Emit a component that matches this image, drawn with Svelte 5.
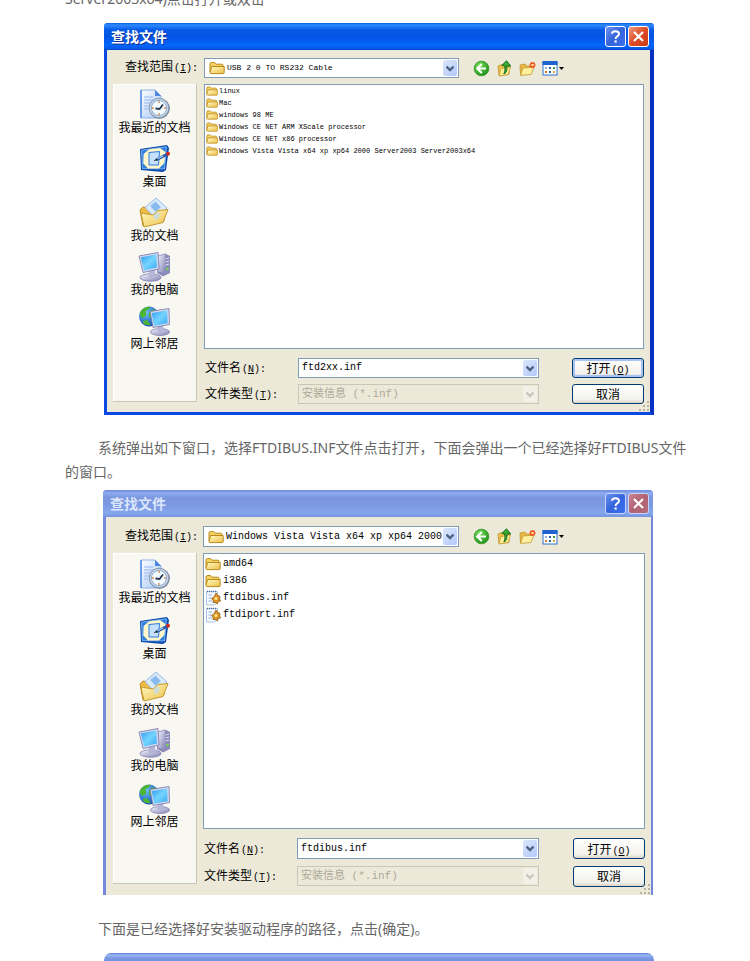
<script>
  const places = [
    { icon: 'recent', label: '我最近的文档' },
    { icon: 'desktop', label: '桌面' },
    { icon: 'documents', label: '我的文档' },
    { icon: 'computer', label: '我的电脑' },
    { icon: 'network', label: '网上邻居' }
  ];

  const dialogs = [
    {
      id: 'driver',
      active: true,
      folder: 'USB 2 0 TO RS232 Cable',
      fileName: 'ftd2xx.inf',
      files: [
        { icon: 'folder', name: 'linux' },
        { icon: 'folder', name: 'Mac' },
        { icon: 'folder', name: 'windows 98 ME' },
        { icon: 'folder', name: 'Windows CE NET ARM XScale processor' },
        { icon: 'folder', name: 'Windows CE NET x86 processor' },
        { icon: 'folder', name: 'Windows Vista Vista x64 xp xp64 2000 Server2003 Server2003x64' }
      ]
    },
    {
      id: 'bus',
      active: false,
      folder: 'Windows Vista Vista x64 xp xp64 2000',
      fileName: 'ftdibus.inf',
      files: [
        { icon: 'folder', name: 'amd64' },
        { icon: 'folder', name: 'i386' },
        { icon: 'inf', name: 'ftdibus.inf' },
        { icon: 'inf', name: 'ftdiport.inf' }
      ]
    }
  ];
</script>

{#snippet icon(name, size)}
  <svg class="icon" width={size} height={size} aria-hidden="true"><use href="#{name}" /></svg>
{/snippet}

{#snippet arrow()}
  <svg width="8" height="7" viewBox="0 0 8 7" aria-hidden="true">
    <path d="M0.5 1.5 L4 5 L7.5 1.5" fill="none" stroke="currentColor" stroke-width="2.4" />
  </svg>
{/snippet}

{#snippet fileDialog(d)}
  <section class="dialog" class:active={d.active}>
    <header class="title">
      <h2>查找文件</h2>
      <button class="caption" aria-label="帮助">
        <svg width="19" height="19" viewBox="0 0 19 19">
          <path d="M6 6.7 C6 3.4 13 3.2 13 6.9 C13 9.3 9.6 9 9.6 12" fill="none" stroke="#fff" stroke-width="2" />
          <rect x="8.5" y="13.4" width="2.2" height="2.2" fill="#fff" />
        </svg>
      </button>
      <button class="caption close" aria-label="关闭">
        <svg width="19" height="19" viewBox="0 0 19 19">
          <path d="M5 5 L14 14 M14 5 L5 14" stroke="#fff" stroke-width="2.2" />
        </svg>
      </button>
    </header>

    <div class="body">
      <div class="lookin">
        <label for="{d.id}-folder">查找范围<span class="key">(<u>I</u>):</span></label>
        <div class="combo">
          {@render icon('folder', 16)}
          <select id="{d.id}-folder"><option>{d.folder}</option></select>
          <span class="drop">{@render arrow()}</span>
        </div>
        <div class="tools">
          <button aria-label="后退">{@render icon('back', 17)}</button>
          <button aria-label="向上一级">{@render icon('up', 17)}</button>
          <button aria-label="新建文件夹">{@render icon('newfolder', 17)}</button>
          <button class="views" aria-label="查看">
            {@render icon('views', 16)}
            <svg width="5" height="3" viewBox="0 0 5 3"><path d="M0 0 H5 L2.5 3 Z" /></svg>
          </button>
        </div>
      </div>

      <div class="content">
        <nav class="places">
          {#each places as place}
            <button>
              {@render icon(place.icon, 32)}
              <span>{place.label}</span>
            </button>
          {/each}
        </nav>

        <div class="main">
          <ul class="files">
            {#each d.files as file}
              <li>
                {@render icon(file.icon, d.active ? 12 : 16)}
                <span>{file.name}</span>
              </li>
            {/each}
          </ul>

          <div class="field">
            <label for="{d.id}-name">文件名<span class="key">(<u>N</u>):</span></label>
            <div class="combo">
              <input id="{d.id}-name" type="text" value={d.fileName} />
              <button class="drop" aria-label="展开">{@render arrow()}</button>
            </div>
            <button class="push default">打开<span class="key">(<u>O</u>)</span></button>
          </div>
          <div class="field">
            <label for="{d.id}-type">文件类型<span class="key">(<u>T</u>):</span></label>
            <div class="combo disabled">
              <select id="{d.id}-type" disabled><option>安装信息 (*.inf)</option></select>
              <span class="drop">{@render arrow()}</span>
            </div>
            <button class="push">取消</button>
          </div>
        </div>
      </div>
    </div>

    <svg class="grip" width="11" height="11" viewBox="0 0 11 11" fill="#b8b4a2" aria-hidden="true">
      <path d="M8 0h2v2h-2z M4 4h2v2h-2z M8 4h2v2h-2z M0 8h2v2h-2z M4 8h2v2h-2z M8 8h2v2h-2z" />
    </svg>
  </section>
{/snippet}

<svg class="sprite" aria-hidden="true">
  <defs>
    <linearGradient id="gold" x1="0" y1="0" x2="1" y2="1">
      <stop offset="0" stop-color="#fffbc4" />
      <stop offset="1" stop-color="#eec04a" />
    </linearGradient>
    <linearGradient id="screen" x1="0" y1="0" x2="1" y2="1">
      <stop offset="0" stop-color="#2f9af0" />
      <stop offset="0.5" stop-color="#74d4ff" />
      <stop offset="1" stop-color="#38a8f4" />
    </linearGradient>
    <linearGradient id="metal" x1="0" y1="0" x2="1" y2="1">
      <stop offset="0" stop-color="#f2f2fc" />
      <stop offset="1" stop-color="#8384b6" />
    </linearGradient>
    <linearGradient id="paper" x1="0" y1="0" x2="1" y2="1">
      <stop offset="0" stop-color="#ffffff" />
      <stop offset="1" stop-color="#a5c6f4" />
    </linearGradient>
    <radialGradient id="green" cx="0.35" cy="0.3" r="0.8">
      <stop offset="0" stop-color="#7be05c" />
      <stop offset="1" stop-color="#178a14" />
    </radialGradient>
    <radialGradient id="ocean" cx="0.35" cy="0.3" r="0.8">
      <stop offset="0" stop-color="#6fc4ff" />
      <stop offset="1" stop-color="#0a3fae" />
    </radialGradient>
  </defs>

  <symbol id="folder" viewBox="0 0 16 16">
    <path d="M1 4 Q1 2.5 2.5 2.5 H5.5 L7 4.2 H13 Q14 4.2 14 5.4 V12 H1 Z" fill="#f5d262" stroke="#b88a1c" />
    <path d="M2.6 6.5 H15.2 V12.6 Q15.2 13.6 14.2 13.6 H2 Q1 13.6 1 12.5 Z" fill="url(#gold)" stroke="#b88a1c" />
  </symbol>

  <symbol id="inf" viewBox="0 0 16 16">
    <path d="M1.5 1.5 H12.5 V11 L9.5 15 H1.5 Z" fill="#f4f9ff" stroke="#a9c3e2" />
    <path d="M2 1.5 H12" stroke="#4b6c9c" stroke-width="1.6" stroke-dasharray="1 1" />
    <path d="M3.5 5 H7 M3.5 8 H6 M3.5 11 H7" stroke="#92b4df" />
    <path d="M11 3 L12.8 5.2 L15 6.5 L14.6 9 L15.6 11 L13 11.5 L12.4 14 L10.5 12.5 L8 12.5 L8.3 10.4 L6.4 8.6 L9 7 Z" fill="#dc9628" stroke="#8d5c12" stroke-width="0.8" />
    <circle cx="11" cy="8.6" r="1.5" fill="#ffe58c" />
  </symbol>

  <symbol id="back" viewBox="0 0 17 17">
    <circle cx="8.5" cy="8.5" r="7.3" fill="url(#green)" stroke="#3d9c30" />
    <path d="M8.8 4 L4.3 8.5 L8.8 13 M5 8.5 H13" fill="none" stroke="#fff" stroke-width="2.2" />
  </symbol>

  <symbol id="up" viewBox="0 0 17 17">
    <path d="M2 6 L6 4.5 L8 6 H13 V14.5 L3 15.5 Z" fill="#edc14d" stroke="#be9429" stroke-width="0.8" />
    <path d="M5 8.5 L14.5 7 L12 14.5 L3 16 Z" fill="#fff19a" stroke="#c59b2d" stroke-width="0.8" />
    <path d="M7.8 14 C11.5 12.5 11 9 10.7 6 H14.8 L10.5 0.8 L5.8 5.4 L8.6 5.8 C9.3 9 9 11.5 7.8 14 Z" fill="#35ad32" stroke="#126217" stroke-width="0.9" />
  </symbol>

  <symbol id="newfolder" viewBox="0 0 17 17">
    <path d="M1 5 L6 4 L7.5 6 H12 V14 L1.5 15 Z" fill="#e7b843" stroke="#c1962d" stroke-width="0.8" />
    <path d="M4 8 L15 7.2 L12 14.5 L1.5 15.4 Z" fill="#fff0a0" stroke="#c49b33" stroke-width="0.8" />
    <path d="M13.5 2 V8 M10.5 5 H16.5 M11.4 2.9 L15.6 7.1 M15.6 2.9 L11.4 7.1" stroke="#ec4a1a" stroke-width="1.5" />
    <circle cx="13.5" cy="5" r="1.3" fill="#ffe294" />
  </symbol>

  <symbol id="views" viewBox="0 0 16 16">
    <rect x="1" y="2" width="14" height="13" fill="#fff" stroke="#2b6fd2" />
    <rect x="0.5" y="1" width="15" height="4" fill="#1f62cd" />
    <path d="M3 7h2v2H3z" fill="#9db1cf" />
    <path d="M3 11h2v2H3z" fill="#e77536" />
    <path d="M7 7h2v2H7z M7 11h2v2H7z" fill="#2d5ca6" />
    <path d="M11 7h2v2h-2z" fill="#349545" />
    <path d="M11 11h2v2h-2z" fill="#d9a63a" />
  </symbol>

  <symbol id="recent" viewBox="0 0 32 32">
    <path d="M3 1 H17 L23 7 V29 H3 Z" fill="url(#paper)" stroke="#8db2ea" />
    <path d="M3 1 V29" stroke="#4c86e0" stroke-width="1.4" />
    <path d="M17 1 V7 H23 Z" fill="#4c86e0" />
    <path d="M6 8 H15 M6 11 H18 M6 14 H13 M6 17 H11 M6 20 H10" stroke="#93b6ef" />
    <circle cx="21.5" cy="19.5" r="10.3" fill="#6d7b92" />
    <circle cx="21" cy="19" r="9.8" fill="#c9d5e3" stroke="#8799b5" />
    <circle cx="21" cy="19" r="7.6" fill="#f3faff" stroke="#8dafd5" />
    <path d="M21 12v2 M21 24v2 M14 19h2 M26 19h2" stroke="#e08c45" stroke-width="1.4" />
    <path d="M17.5 19.5 L21.5 20 L25 15.5" fill="none" stroke="#26374f" stroke-width="1.8" />
  </symbol>

  <symbol id="desktop" viewBox="0 0 32 32">
    <path d="M1 6 L28 2 L30 5 L27 27 L24 29 L2 27 Z" fill="#0b4ba8" />
    <path d="M2.5 7.2 L27.5 3.8 L25.5 26 L3.5 25.5 Z" fill="#2f7fe0" stroke="#8bc2ff" stroke-width="0.8" />
    <path d="M10 6.3 L21 5 L26.5 9 L25.4 20 L20 25.5 H9 L4.3 20.5 L4.6 11 Z" fill="#fff6cb" />
    <path d="M10 9.5 L20.5 8.5 L19.5 22 H10 Z" fill="#c4e2ff" stroke="#2f7bdc" />
    <path d="M18 16.5 L28.5 11" stroke="#2d60b0" stroke-width="3" />
    <path d="M18 16 L24 13" stroke="#a9d0f8" stroke-width="1.2" />
    <path d="M14.5 18 L18 15 L19 17.6 Z" fill="#222c45" />
    <circle cx="29" cy="10.8" r="2" fill="#ce2b1d" />
  </symbol>

  <symbol id="documents" viewBox="0 0 32 32">
    <path d="M2 13 L5 10 L11 11 L15 8 L27 11 L26 24 L5 29 Z" fill="#eebb45" stroke="#bd8c22" />
    <path d="M7 10.5 L18 1 L29 11 L18 22 Z" fill="#dcebfb" stroke="#96bbe5" />
    <path d="M12 9 L17.5 4.5 L23 10 L17.5 15 Z" fill="#88b9ef" stroke="#bcd9f7" />
    <path d="M3 16 L15 18 L20 13.5 L30 12.5 L25 25.5 L6 30 Z" fill="url(#gold)" stroke="#c79a32" />
    <path d="M15 19 L20 14.5 L22 19 L18 24 Z" fill="#c4dcec" opacity="0.8" />
  </symbol>

  <symbol id="computer" viewBox="0 0 32 32">
    <path d="M19 5 L27 2.5 L32 5 V22 L25 25.5 L19 22 Z" fill="#8b8cb9" />
    <path d="M20 5.5 L27 3.2 V22 L20 20.5 Z" fill="url(#metal)" />
    <path d="M27.5 8 L31 7 M27.5 11 L31 10 M27.5 14 L31 13" stroke="#dfe0f3" />
    <circle cx="29.4" cy="18" r="1.3" fill="#73d945" />
    <ellipse cx="12.5" cy="26.5" rx="10.5" ry="3.8" fill="url(#metal)" stroke="#7477a9" stroke-width="0.7" />
    <path d="M11 19 L17 19 L18 26 Q14 28.5 10.5 25.5 Z" fill="#b6b7d8" />
    <path d="M1 5 L20 1.5 L21 18 L5 21.5 Z" fill="#d6d8ee" stroke="#7477a9" stroke-width="0.8" />
    <path d="M2.8 6.3 L18.2 3.5 L19 16.6 L6 19.5 Z" fill="url(#screen)" />
  </symbol>

  <symbol id="network" viewBox="0 0 32 32">
    <circle cx="11" cy="11.5" r="10" fill="url(#ocean)" />
    <path d="M2 7 Q6 1 13 1.8 L10 5 L7.5 6 L8.5 10 L5 13 L2 11 Z M11 7 L16 4 L18 8 L15 14 L11 12 Z M5 16 L9 15 L13 20 Q8 21 5 18 Z" fill="#4cb634" />
    <ellipse cx="22" cy="27" rx="9.5" ry="3.5" fill="url(#metal)" stroke="#7477a9" stroke-width="0.7" />
    <path d="M19 20 H25 L26 26.5 Q22 28.5 19.5 26 Z" fill="#b6b7d8" />
    <path d="M12 6.5 L31 3.5 L31.5 19.5 L15 22.5 Z" fill="#d6d8ee" stroke="#7477a9" stroke-width="0.8" />
    <path d="M13.7 8 L29.2 5.5 L29.6 18.2 L16 20.7 Z" fill="url(#screen)" />
  </symbol>
</svg>

<article>
  <div class="lead"><p>Server2003x64)点击打开或双击</p></div>
  {@render fileDialog(dialogs[0])}
  <p class="step">系统弹出如下窗口，选择FTDIBUS.INF文件点击打开，下面会弹出一个已经选择好FTDIBUS文件的窗口。</p>
  {@render fileDialog(dialogs[1])}
  <p class="step last">下面是已经选择好安装驱动程序的路径，点击(确定)。</p>
  <div class="next"></div>
</article>

<style>
  :global(body) {
    margin: 0;
    background: #fff;
  }
  .sprite {
    display: block;
    width: 0;
    height: 0;
  }
  article {
    padding: 0 60px 0 65px;
    color: #666;
    font: 14px/24px "Noto Sans", "Noto Sans CJK SC", sans-serif;
  }
  p {
    margin: 0;
  }
  .lead {
    display: flex;
    align-items: flex-end;
    height: 11px;
    margin-bottom: 12px;
    overflow: hidden;
  }
  .step {
    padding: 21px 0 6px;
    text-indent: 33px;
  }
  .step.last {
    padding: 22px 0 12px;
  }
  .next {
    height: 8px;
    margin: 0 36px 0 39px;
    border-radius: 7px 7px 0 0;
    background: linear-gradient(#5b78cf, #9db9f2 2px, #7b99e4 5px, #7591de);
  }

  .dialog {
    position: relative;
    box-sizing: border-box;
    margin: 0 37px 0 38px;
    border: solid #7588e0;
    border-width: 0 2px 0 3px;
    border-radius: 4px 4px 0 0;
    background: #ece9d8;
    color: #000;
    font: 12px/16px "Noto Sans CJK SC", sans-serif;
  }
  .dialog.active {
    margin: 0 36px 0 39px;
    border-color: #0a48e4;
    border-right-color: #0831c4;
    border-width: 0 4px 3px 3px;
  }
  button {
    padding: 0;
    border: 0;
    background: none;
    color: inherit;
    font: inherit;
  }
  .icon {
    flex: none;
    display: block;
  }
  .key {
    margin-left: 1px;
    font: 10px/10px "Liberation Mono", monospace;
  }

  .title {
    display: flex;
    align-items: center;
    gap: 2px;
    height: 27px;
    margin: 0 -2px 0 -3px;
    padding: 0 4px 0 7px;
    border-radius: 4px 4px 0 0;
    background: linear-gradient(#6d8ade, #8eabee 3px, #7a96df 8px, #7c9ae3 16px, #85a8ec 23px, #7893de);
    color: #dce6fb;
  }
  .active .title {
    margin: 0 -4px 0 -3px;
    padding: 0 5px 0 7px;
    background: linear-gradient(#0a5ad8, #2f8bff 2px, #0759e6 7px, #0454e4 14px, #0566fd 22px, #0458e8 26px, #0141c0);
    color: #fff;
    text-shadow: 1px 1px 0 #0a2f94;
  }
  h2 {
    flex: 1;
    margin: 0;
    padding-bottom: 2px;
    font-size: 14px;
    line-height: 20px;
    font-weight: bold;
  }
  .caption {
    display: flex;
    box-sizing: border-box;
    width: 21px;
    height: 21px;
    border: 1px solid #c6d6fa;
    border-radius: 3px;
    background: linear-gradient(135deg, #6c92ee, #3463dc 50%, #3c70ee);
  }
  .caption.close {
    background: linear-gradient(135deg, #c88590, #b06273 50%, #b46c78);
  }
  .active .caption {
    border-color: #fff;
  }
  .active .close {
    background: linear-gradient(135deg, #f09a80, #dd4c28 50%, #cc3b12);
  }

  .body {
    padding: 9px 6px 9px 7px;
  }
  .active .body {
    padding: 8px 6px 8px;
  }
  .lookin {
    display: flex;
    align-items: center;
    height: 21px;
    margin-bottom: 6px;
  }
  .active .lookin {
    height: 20px;
  }
  .lookin label {
    box-sizing: border-box;
    width: 90px;
    padding: 0 0 4px 12px;
    white-space: nowrap;
  }
  .active .lookin label {
    width: 91px;
  }
  .combo {
    display: flex;
    flex: 1;
    box-sizing: border-box;
    min-width: 0;
    height: 21px;
    border: 1px solid #7f9db9;
    background: #fff;
  }
  .active .combo {
    height: 20px;
  }
  .lookin .icon {
    align-self: center;
  }
  .lookin .combo .icon {
    margin: 0 2px 0 4px;
  }
  select,
  input {
    appearance: none;
    flex: 1;
    min-width: 0;
    padding: 0 0 0 3px;
    border: 0;
    border-radius: 0;
    outline: 0;
    background: none;
    color: #000;
    font: 10px/18px "Liberation Mono", "Noto Sans CJK SC", monospace;
  }
  .lookin select {
    padding: 0;
  }
  .active .lookin select {
    font-size: 8px;
  }
  .drop {
    display: flex;
    align-items: center;
    justify-content: center;
    width: 14px;
    margin: 1px;
    border-radius: 2px;
    background: linear-gradient(135deg, #dce7fe, #b1c8f8);
    color: #4d6185;
  }
  .combo.disabled {
    height: 20px;
    border-color: #c9c7ba;
    background: #ece9d8;
  }
  .disabled select {
    color: #aca899;
    opacity: 1;
    font-size: 11px;
  }
  .disabled .drop {
    background: #f3f1e7;
    color: #c9c7ba;
  }
  .tools {
    display: flex;
    align-items: center;
    gap: 6px;
    box-sizing: border-box;
    width: 186px;
    padding-left: 14px;
  }
  .active .tools {
    width: 185px;
  }
  .views {
    display: flex;
    align-items: center;
    gap: 1px;
  }

  .content {
    display: flex;
    gap: 6px;
  }
  .active .content {
    gap: 7px;
  }
  .places {
    display: flex;
    flex-direction: column;
    align-items: center;
    gap: 12px;
    box-sizing: border-box;
    width: 84px;
    margin-bottom: 2px;
    padding-top: 6px;
    border: solid #c9c7ba;
    border-width: 0 1px 1px 0;
    background: #f8f7f2;
    box-shadow: inset 1px 1px #fff;
  }
  .active .places {
    gap: 10px;
    padding-top: 5px;
  }
  .places button {
    display: flex;
    flex-direction: column;
    align-items: center;
    line-height: 12px;
    white-space: nowrap;
  }
  .main {
    flex: 1;
    min-width: 0;
  }
  .files {
    box-sizing: border-box;
    min-height: 276px;
    margin: 0 0 9px;
    padding: 1px;
    border: 1px solid #7f9db9;
    background: #fff;
    list-style: none;
    font: 10px/17px "Liberation Mono", monospace;
  }
  .active .files {
    min-height: 265px;
    padding-top: 0;
    font-size: 7px;
    line-height: 12px;
  }
  .files li {
    display: flex;
    align-items: center;
    gap: 2px;
    white-space: nowrap;
  }
  .active .files li {
    gap: 1px;
  }
  .field {
    display: flex;
    align-items: center;
    height: 21px;
  }
  .active .field {
    height: 20px;
  }
  .field + .field {
    height: 20px;
    margin-top: 7px;
  }
  .active .field + .field {
    margin-top: 6px;
  }
  .field label {
    box-sizing: border-box;
    width: 94px;
    padding: 0 0 2px 1px;
  }
  .push {
    box-sizing: border-box;
    width: 72px;
    height: 21px;
    margin-left: 34px;
    border: 1px solid #003c74;
    border-radius: 3px;
    background: linear-gradient(#fff, #f3f2ec 80%, #d9d4c8);
    line-height: 16px;
  }
  .active .push {
    height: 20px;
    margin-left: 33px;
  }
  .active .default {
    box-shadow: inset 0 0 0 2px #a9c4f0;
  }

  /* resize handle laid over the bottom corner */
  .grip {
    position: absolute;
    right: 0;
    bottom: 0;
  }
</style>
